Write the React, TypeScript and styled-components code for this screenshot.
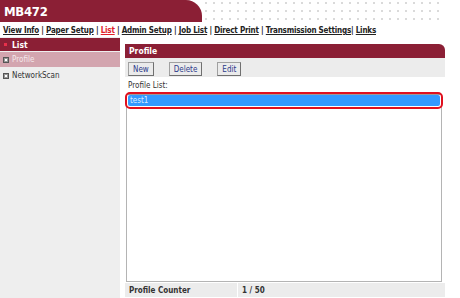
import styled, { createGlobalStyle } from "styled-components";

const FONT = `"DejaVu Sans Condensed", "DejaVu Sans", Verdana, sans-serif`;

const GlobalStyle = createGlobalStyle`
    html, body {
        margin: 0;
        padding: 0;
        background: #ffffff;
    }
    body {
        font-family: ${FONT};
        font-size: 8px;
        color: #333333;
    }
`;

const Page = styled.div`
    width: 460px;
    height: 298px;
    overflow: hidden;
    display: flex;
    flex-direction: column;
`;

const Header = styled.div`
    display: flex;
    height: 22px;
    flex-shrink: 0;
`;

const Brand = styled.div`
    width: 202px;
    background: #8b1f35;
    border-top-right-radius: 16px;
    color: #ffffff;
    font-weight: bold;
    font-size: 13px;
    letter-spacing: -0.3px;
    padding: 4px 0 0 4px;
    box-sizing: border-box;
`;

const Dots = styled.div`
    width: 240px;
    background-image: radial-gradient(circle, #dadada 0.8px, transparent 1px);
    background-size: 8px 8px;
    background-position: 0 -1px;
`;

const Nav = styled.div`
    flex-shrink: 0;
    padding: 4px 0 0 3px;
    height: 11px;
    font-weight: bold;
    font-size: 8px;
    letter-spacing: -0.2px;
    color: #222222;
    white-space: nowrap;
`;

const NavLink = styled.a<{ $active?: boolean }>`
    color: ${(p) => (p.$active ? "#e0202a" : "#222222")};
    text-decoration: underline;
`;

const Body = styled.div`
    flex: 1;
    min-height: 0;
    display: flex;
    gap: 5px;
`;

const Sidebar = styled.div`
    width: 120px;
    background: #eeeeee;
`;

const SideTitle = styled.div`
    height: 13px;
    background: #8b1f35;
    color: #ffffff;
    font-weight: bold;
    font-size: 8.5px;
    display: flex;
    align-items: center;
    gap: 5px;
    padding-left: 4px;
    margin-top: 1px;
`;

const Bullet = styled.span`
    width: 3px;
    height: 3px;
    background: #e8304a;
`;

const SideItem = styled.div<{ $selected?: boolean }>`
    height: 15px;
    margin-top: 1px;
    display: flex;
    align-items: center;
    gap: 3px;
    padding-left: 3px;
    background: ${(p) => (p.$selected ? "#d3a5af" : "transparent")};
    color: ${(p) => (p.$selected ? "#f4e8ea" : "#333333")};
    font-size: 8px;
`;

const Box = styled.span`
    width: 4px;
    height: 4px;
    border: 1px solid #555555;
    background: #ffffff;
    box-shadow: inset 0 0 0 1px #999999;
`;

const Main = styled.div`
    width: 320px;
    padding-top: 7px;
    display: flex;
    flex-direction: column;
`;

const PanelTitle = styled.div`
    height: 14px;
    background: #8b1f35;
    border-top-right-radius: 6px;
    color: #ffffff;
    font-weight: bold;
    font-size: 8.5px;
    padding-left: 4px;
    display: flex;
    align-items: center;
`;

const Toolbar = styled.div`
    height: 19px;
    background: #ececec;
    display: flex;
    align-items: center;
    padding-left: 3px;
    gap: 15px;
`;

const Button = styled.button`
    height: 14px;
    padding: 0 4px;
    background: #ebebeb;
    border: 1px solid #a0a0a0;
    border-right-color: #707070;
    border-bottom-color: #707070;
    font-family: ${FONT};
    font-size: 8px;
    color: #2d3a8a;
    margin-top: 3px;
`;

const Label = styled.div`
    padding: 4px 0 0 3px;
    height: 11px;
    font-size: 8px;
`;

const ListBox = styled.div`
    margin: 2px 3px 0 1px;
    height: 186px;
    border: 1px solid #b4b4b4;
    border-top-color: #9a9a9a;
    background: #ffffff;
`;

const Option = styled.div`
    margin: 0 1px;
    height: 11px;
    background: #3399ff;
    color: #dcecff;
    font-size: 8px;
    padding-left: 2px;
    display: flex;
    align-items: center;
    outline: 2px solid #e0101e;
    outline-offset: 1px;
    border-radius: 2px;
`;

const CounterRow = styled.div`
    display: grid;
    grid-template-columns: 112px 1fr;
    gap: 1px;
    margin-top: 1px;
    height: 14px;
`;

const Cell = styled.div`
    background: #ececec;
    font-weight: bold;
    font-size: 8px;
    color: #333333;
    display: flex;
    align-items: center;
    padding-left: 4px;
`;

const navItems = [
    "View Info",
    "Paper Setup",
    "List",
    "Admin Setup",
    "Job List",
    "Direct Print",
    "Transmission Settings",
];

export default function App() {
    return (
        <Page>
            <GlobalStyle />
            <Header>
                <Brand>MB472</Brand>
                <Dots />
            </Header>
            <Nav>
                {navItems.map((item, i) => (
                    <span key={item}>
                        <NavLink $active={item === "List"}>{item}</NavLink>
                        {i < navItems.length - 1 ? " | " : "| "}
                    </span>
                ))}
                <NavLink>Links</NavLink>
            </Nav>
            <Body>
                <Sidebar>
                    <SideTitle>
                        <Bullet />
                        List
                    </SideTitle>
                    <SideItem $selected>
                        <Box />
                        Profile
                    </SideItem>
                    <SideItem>
                        <Box />
                        NetworkScan
                    </SideItem>
                </Sidebar>
                <Main>
                    <PanelTitle>Profile</PanelTitle>
                    <Toolbar>
                        <Button>New</Button>
                        <Button>Delete</Button>
                        <Button>Edit</Button>
                    </Toolbar>
                    <Label>Profile List:</Label>
                    <ListBox>
                        <Option>test1</Option>
                    </ListBox>
                    <CounterRow>
                        <Cell>Profile Counter</Cell>
                        <Cell>1 / 50</Cell>
                    </CounterRow>
                </Main>
            </Body>
        </Page>
    );
}
